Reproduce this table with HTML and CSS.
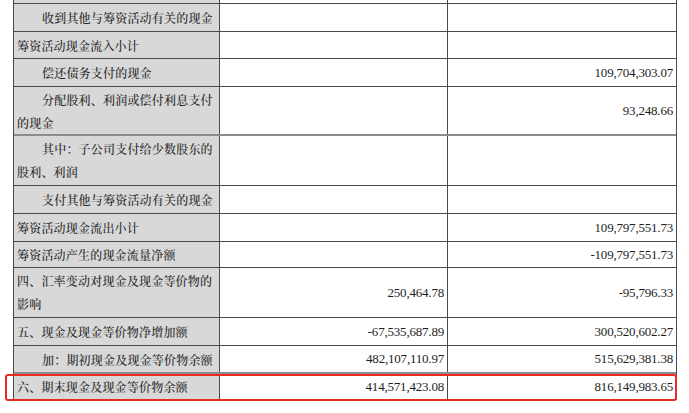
FILE: index.html
```html
<!DOCTYPE html>
<html lang="zh-CN">
<head>
<meta charset="utf-8">
<title>筹资活动现金流量</title>
<link rel="stylesheet" href="styles.css">
</head>
<body>
<div class="page">
  <div class="sheet">
    <div class="row stub"><div class="c label"></div><div class="c num"></div><div class="c num"></div></div>
    <div class="row h28"><div class="c label ind">收到其他与筹资活动有关的现金</div><div class="c num"></div><div class="c num"></div></div>
    <div class="row h27"><div class="c label">筹资活动现金流入小计</div><div class="c num"></div><div class="c num"></div></div>
    <div class="row h28"><div class="c label ind">偿还债务支付的现金</div><div class="c num"></div><div class="c num">109,704,303.07</div></div>
    <div class="row h49 soft"><div class="c label ind two">分配股利、利润或偿付利息支付<br>的现金</div><div class="c num"></div><div class="c num">93,248.66</div></div>
    <div class="row h50"><div class="c label ind two">其中：子公司支付给少数股东的<br>股利、利润</div><div class="c num"></div><div class="c num"></div></div>
    <div class="row h28"><div class="c label ind">支付其他与筹资活动有关的现金</div><div class="c num"></div><div class="c num"></div></div>
    <div class="row h28"><div class="c label">筹资活动现金流出小计</div><div class="c num"></div><div class="c num">109,797,551.73</div></div>
    <div class="row h26"><div class="c label">筹资活动产生的现金流量净额</div><div class="c num"></div><div class="c num">-109,797,551.73</div></div>
    <div class="row h50"><div class="c label two">四、汇率变动对现金及现金等价物的<br>影响</div><div class="c num">250,464.78</div><div class="c num">-95,796.33</div></div>
    <div class="row h28"><div class="c label">五、现金及现金等价物净增加额</div><div class="c num">-67,535,687.89</div><div class="c num">300,520,602.27</div></div>
    <div class="row h28 soft"><div class="c label ind">加：期初现金及现金等价物余额</div><div class="c num">482,107,110.97</div><div class="c num">515,629,381.38</div></div>
    <div class="row h26"><div class="c label">六、期末现金及现金等价物余额</div><div class="c num">414,571,423.08</div><div class="c num">816,149,983.65</div></div>
  </div>
  <div class="highlight"></div>
</div>
</body>
</html>
```
FILE: styles.css
```css
html, body {
  margin: 0;
  padding: 0;
  background: #ffffff;
}

.page {
  position: relative;
  width: 689px;
  height: 413px;
  overflow: hidden;
}

.sheet {
  margin-left: 13px;
  width: 664px;
  box-sizing: border-box;
  border-left: 1px solid #4a4a4a;
  border-right: 1px solid #4a4a4a;
}

.row {
  display: grid;
  grid-template-columns: 205px 228px 229px;
  box-sizing: border-box;
  border-bottom: 1px solid #4a4a4a;
}

.row.soft {
  border-bottom: 2px solid #8c8c8c;
}

.stub { height: 4px; }
.h26 { height: 26px; }
.h27 { height: 27px; }
.h28 { height: 28px; }
.h49 { height: 49px; }
.h50 { height: 50px; }

.c {
  display: flex;
  align-items: center;
  box-sizing: border-box;
  white-space: nowrap;
  overflow: hidden;
}

.c + .c {
  border-left: 1px solid #4a4a4a;
}

.label {
  background: #d8d8d8;
  padding-left: 3px;
  font-family: "Noto Serif CJK SC", "Noto Sans CJK SC", serif;
  font-size: 12px;
  font-weight: 500;
  letter-spacing: 0.2px;
  line-height: 23px;
  color: #262626;
}

.label.ind {
  text-indent: 25px;
}

.label.two {
  display: block;
  padding-top: 1px;
}

.num {
  justify-content: flex-end;
  padding-right: 3px;
  font-family: "Liberation Serif", "Times New Roman", serif;
  font-size: 13px;
  letter-spacing: -0.2px;
  color: #1e1e1e;
}

.highlight {
  position: absolute;
  left: 5px;
  top: 374px;
  width: 672px;
  height: 27px;
  box-sizing: border-box;
  border: 2px solid #ec2a24;
  border-radius: 3px;
}
```
